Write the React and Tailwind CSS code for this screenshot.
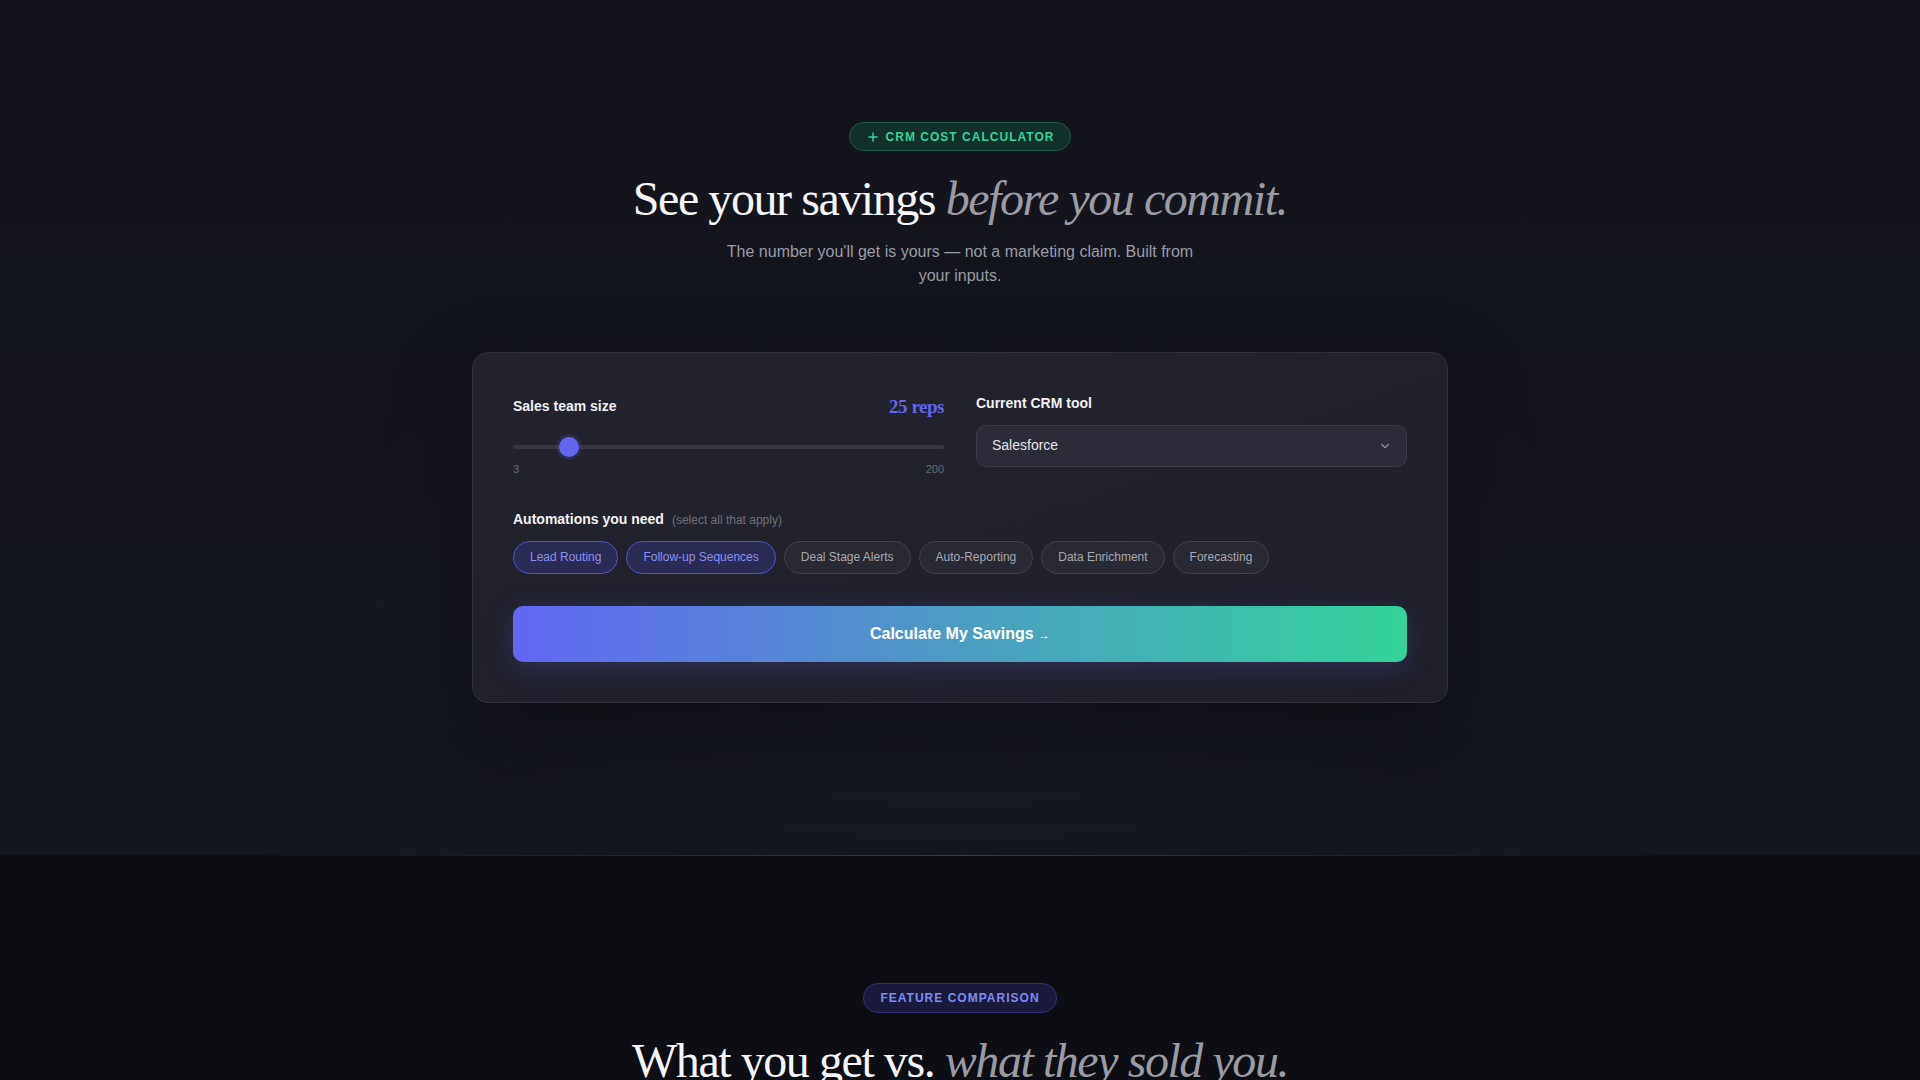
import { useState } from 'react';
import { Plus, ChevronDown } from 'lucide-react';

const automations = [
    'Lead Routing',
    'Follow-up Sequences',
    'Deal Stage Alerts',
    'Auto-Reporting',
    'Data Enrichment',
    'Forecasting',
];

const MIN_REPS = 3;
const MAX_REPS = 200;

const sans = 'font-["Liberation_Sans",Arial,sans-serif]';
const serif = 'font-["Liberation_Serif","Times_New_Roman",serif]';

const RepSlider = ({ value }) => {
    const pct = (value - MIN_REPS) / (MAX_REPS - MIN_REPS);
    return (
        <div className="relative h-5 mt-4">
            <div className="absolute left-0 right-0 top-1/2 -translate-y-1/2 h-1 rounded-full bg-[#363741]" />
            <div
                className="absolute top-0 w-5 h-5 rounded-full bg-[#6366f1] shadow-[0_0_0_3px_rgba(99,102,241,0.15)]"
                style={{ left: `calc(${pct} * (100% - 20px))` }}
            />
        </div>
    );
};

const App = () => {
    const [reps] = useState(25);
    const [selected, setSelected] = useState(['Lead Routing', 'Follow-up Sequences']);

    const toggle = (name) => {
        setSelected((prev) => (prev.includes(name) ? prev.filter((n) => n !== name) : [...prev, name]));
    };

    return (
        <div className={`min-h-screen bg-[#0d0e13] text-white ${sans}`}>
            {/* Calculator */}
            <section className="relative bg-[linear-gradient(180deg,#13141b_0%,#151720_100%)] pt-[122px] pb-[152px] overflow-hidden">
                <div className="absolute left-1/2 top-[300px] -translate-x-1/2 w-[1400px] h-[560px] rounded-full bg-[radial-gradient(ellipse_at_center,rgba(40,42,58,0.35)_0%,rgba(20,22,30,0)_70%)]" />

                <div className="relative flex flex-col items-center">
                    <div className="flex items-center gap-1.5 h-[29px] px-4 rounded-full border border-[#1f5c46] bg-[#12302a] text-[#34d399]">
                        <Plus className="w-3.5 h-3.5" strokeWidth={2.5} />
                        <span className="text-[12px] font-bold tracking-[0.085em] uppercase">CRM Cost Calculator</span>
                    </div>

                    <h1 className={`mt-[22px] text-[48px] leading-[1.1] tracking-[-0.03em] text-[#f5f5f7] ${serif}`}>
                        See your savings <em className="text-[#9a9ba3]">before you commit.</em>
                    </h1>

                    <p className="mt-3.5 max-w-[480px] text-center text-[16px] leading-6 text-[#9b9ca6]">
                        The number you'll get is yours — not a marketing claim. Built from your inputs.
                    </p>

                    <div className="mt-16 w-[976px] rounded-2xl border border-[#31323d] bg-[linear-gradient(160deg,#22232d_0%,#1f2029_100%)] p-10 shadow-[0_30px_80px_rgba(0,0,0,0.45)]">
                        <div className="grid grid-cols-2 gap-8">
                            <div>
                                <div className="flex items-center justify-between h-7">
                                    <span className="text-[14px] font-bold text-[#f1f1f4]">Sales team size</span>
                                    <span className={`text-[19px] font-bold tracking-[-0.025em] text-[#6366f1] ${serif}`}>{reps} reps</span>
                                </div>
                                <RepSlider value={reps} />
                                <div className="mt-1 flex justify-between text-[11px] leading-4 text-[#6b6c76]">
                                    <span>{MIN_REPS}</span>
                                    <span>{MAX_REPS}</span>
                                </div>
                            </div>

                            <div>
                                <div className="text-[14px] leading-5 font-bold text-[#f1f1f4]">Current CRM tool</div>
                                <button className="mt-3 w-full h-[42px] flex items-center justify-between pl-[15px] pr-3.5 rounded-[10px] border border-[#3b3c48] bg-[#2b2c37] text-[14px] text-[#e6e6ea]">
                                    <span>Salesforce</span>
                                    <ChevronDown className="w-3.5 h-3.5 text-[#8c8d97]" />
                                </button>
                            </div>
                        </div>

                        <div className="mt-8 flex items-baseline gap-2">
                            <span className="text-[14px] leading-5 font-bold text-[#f1f1f4]">Automations you need</span>
                            <span className="text-[12px] text-[#6f707a]">(select all that apply)</span>
                        </div>

                        <div className="mt-3 flex flex-wrap gap-2">
                            {automations.map((name) => {
                                const on = selected.includes(name);
                                return (
                                    <button
                                        key={name}
                                        onClick={() => toggle(name)}
                                        className={
                                            on
                                                ? 'h-[33px] px-4 rounded-full border border-[#5356c4] bg-[#2a2b52] text-[12px] text-[#8d90f3]'
                                                : 'h-[33px] px-4 rounded-full border border-[#42434e] bg-[#282933] text-[12px] text-[#a9aab3]'
                                        }
                                    >
                                        {name}
                                    </button>
                                );
                            })}
                        </div>

                        <button className="mt-8 w-full h-14 rounded-[10px] bg-[linear-gradient(90deg,#6366f1_0%,#34d399_100%)] text-[16px] font-bold text-white shadow-[0_6px_28px_rgba(99,102,241,0.22)]">
                            Calculate My Savings <span className="text-[12px]">→</span>
                        </button>
                    </div>
                </div>
            </section>

            {/* Feature comparison */}
            <section className="relative pt-32 pb-24">
                <div className="absolute top-0 left-[12%] right-[12%] h-px bg-[linear-gradient(90deg,rgba(99,102,241,0)_0%,rgba(99,102,241,0.45)_50%,rgba(99,102,241,0)_100%)]" />
                <div className="flex flex-col items-center">
                    <div className="flex items-center h-[30px] px-4 rounded-full border border-[#33337a] bg-[#1a1a3a] text-[#818cf8]">
                        <span className="text-[12px] font-bold tracking-[0.085em] uppercase">Feature Comparison</span>
                    </div>
                    <h2 className={`mt-[22px] text-[48px] leading-[1.1] tracking-[-0.03em] text-[#f5f5f7] ${serif}`}>
                        What you get vs. <em className="text-[#9a9ba3]">what they sold you.</em>
                    </h2>
                    <p className="mt-3.5 max-w-[480px] text-center text-[16px] leading-6 text-[#9b9ca6]">
                        Same price tier, side by side.
                    </p>
                </div>
            </section>
        </div>
    );
};

export default App;
